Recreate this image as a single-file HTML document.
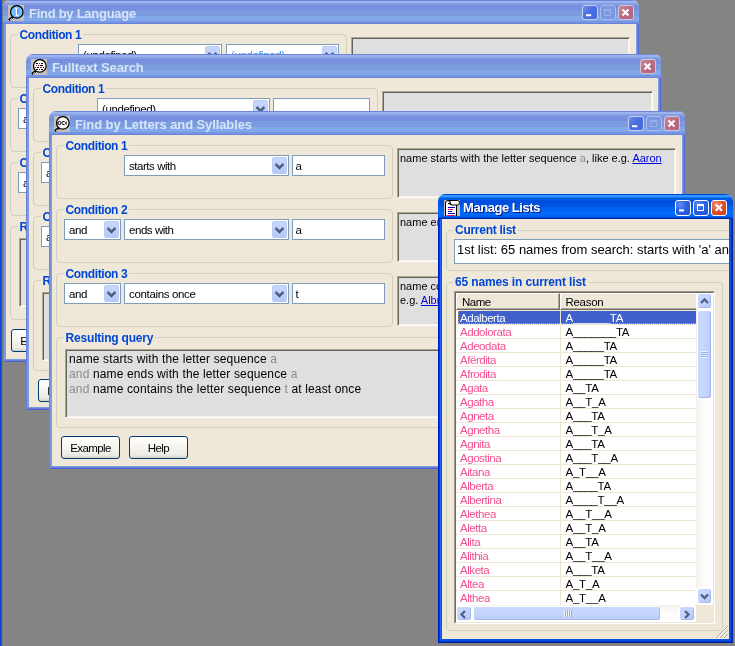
<!DOCTYPE html><html><head><meta charset="utf-8"><title>UI</title><style>
html,body{margin:0;padding:0}
body{width:735px;height:646px;overflow:hidden;background:#848484;position:relative;font-family:"Liberation Sans",sans-serif;font-size:11px;color:#000}
*{box-sizing:border-box}
.abs{position:absolute}
.edgeL{position:absolute;left:0;top:0;width:1px;height:646px;background:#0846e0;box-shadow:1px 0 0 #3a4e9a}
.edgeL2{position:absolute;left:2px;top:0;width:1px;height:646px;background:#7a7a78}
/* windows */
.win{position:absolute;will-change:transform;overflow:hidden;border-radius:7px 7px 0 0;background:#efe8d8}
.win .tb{position:absolute;left:0;top:0;right:0;height:24px}
.win.in .tb{background:linear-gradient(180deg,#6e84dc 1.04%,#6e84dc 3.12%,#9bb4ee 5.21%,#9bb4ee 11.46%,#849fe6 13.54%,#849fe6 19.79%,#7891de 21.88%,#7891de 40.62%,#7a9bde 42.71%,#7a9bde 65.62%,#82a9e8 67.71%,#82a9e8 73.96%,#82a8eb 76.04%,#82a8eb 86.46%,#7696e4 88.54%,#7696e4 94.79%,#6982da 96.88%,#6982da 98.96%)}
.win.in .fr{position:absolute;left:0;top:24px;right:0;bottom:0;box-shadow:inset 1px 0 0 #6c80d8,inset -1px 0 0 #5068cf,inset 0 -1px 0 #4561d2,inset 2px 0 0 #7b99e3,inset -2px 0 0 #6a85dc,inset 0 -2px 0 #6f7cd4,inset 3px 0 0 #7b99e3,inset -3px 0 0 #7d9ae3,inset 0 -3px 0 #7b99e3}
.win.ac .tb{height:25px;background:linear-gradient(180deg,#0046dc 1.00%,#0046dc 3.00%,#3296ff 5.00%,#3296ff 11.00%,#1478f5 13.00%,#1478f5 15.00%,#005fe1 17.00%,#005fe1 23.00%,#004ede 25.00%,#004ede 39.00%,#0054e4 41.00%,#0054e4 51.00%,#0062f0 53.00%,#0062f0 67.00%,#006afa 69.00%,#006afa 83.00%,#0062f0 85.00%,#0062f0 91.00%,#0046d7 93.00%,#0046d7 95.00%,#0028aa 97.00%,#0028aa 99.00%)}
.win.ac .fr{position:absolute;left:0;top:25px;right:0;bottom:0;box-shadow:inset 1px 0 0 #0019cf,inset -1px 0 0 #001ea0,inset 0 -1px 0 #001ea0,inset 2px 0 0 #0831d9,inset -2px 0 0 #0237cf,inset 0 -2px 0 #0237cf,inset 3px 0 0 #166aee,inset -3px 0 0 #0550e0,inset 0 -3px 0 #0550e0,inset 4px 0 0 #0855dd,inset -4px 0 0 #0855dd,inset 0 -4px 0 #0855dd}
.ttl{position:absolute;top:5.5px;font-weight:bold;font-size:13px;line-height:16px;white-space:pre}
.in .ttl{color:#d8e4f8}
.ac .ttl{top:6px;color:#fff;text-shadow:1px 1px 0 #0a1883}
.ico{position:absolute;width:16px;height:16px;background:#c0c0c0}
.cb{position:absolute;width:15.6px;height:15.6px;margin:-0.3px 0 0 -1px;border-radius:3px;border:1px solid #fff}
.in .cb{border-color:#c3d0f3}
.in .cb.min{background:linear-gradient(135deg,#6d8fe8 0%,#4a6fe0 45%,#4669dc 100%)}
.in .cb.max{background:#7b99e3;border-color:#a9bbec}
.in .cb.cls{background:linear-gradient(135deg,#c88a9c 0%,#b96a84 50%,#b06480 100%);border-color:#d7c3d8}
.ac .cb{width:16px;height:16px;margin:0}
.ac .cb.min,.ac .cb.max{background:radial-gradient(circle at 30% 25%,#5c8cf6 0%,#2d62e0 45%,#1f4fd0 100%)}
.ac .cb.cls{background:radial-gradient(circle at 30% 25%,#f0927a 0%,#e0532f 45%,#c63c14 100%)}
.cb svg{position:absolute;left:0;top:0}
/* controls */
.gb{position:absolute;border:1px solid #d0d0bf;border-radius:4px}
.gl{position:absolute;font-weight:bold;color:#0046d5;background:#efe8d8;padding:0 2px;line-height:13px;white-space:pre;font-size:12px}
.combo,.edit{position:absolute;height:21px;border:1px solid #7f9db9;background:#fff;line-height:19px;white-space:pre;overflow:hidden;font-size:11.5px}
.combo span,.edit span{position:absolute;left:4px;top:1px}
.edit span{left:2.6px}
.dd{position:absolute;right:1px;top:1px;width:15px;height:17px;border-radius:2px;background:linear-gradient(180deg,#c6d6fd 0%,#c1d2fb 50%,#b4c7f5 100%);border:1px solid #b9cbf6}
.dd svg{position:absolute;left:2px;top:4.5px}
.sunk{position:absolute;background:#dfdfdf;border:1px solid;border-color:#aaa799 #fff #fff #aaa799;box-shadow:inset 1px 1px 0 #66645a,inset -1px -1px 0 #f5f3ea;white-space:pre;overflow:hidden}
.sunk div{position:absolute;left:2px;white-space:pre;line-height:14px}
.btn{position:absolute;height:23px;border:1px solid #003c74;border-radius:3px;background:linear-gradient(180deg,#fff 0%,#f7f6f1 40%,#ecebe4 85%,#d6d0c5 100%);text-align:center;line-height:22px;white-space:pre;font-size:11.5px}
a{color:#0000e0;text-decoration:underline}
.g{color:#8c8c8c}

.lv{position:absolute;background:#fff;border:1px solid;border-color:#9a978a #fff #fff #9a978a;overflow:hidden}
.lvi{position:absolute;left:0;top:0;right:0;bottom:0;border:1px solid;border-color:#6e6b60 #efe8d8 #efe8d8 #6e6b60;overflow:hidden}
.hc{position:absolute;top:0;height:17px;background:#efe8d8;border:1px solid;border-color:#fff #716f64 #716f64 #fff;box-shadow:inset -1px -1px 0 #aca899;line-height:14px;font-size:11.5px;white-space:pre}
.hc span{position:absolute;top:1px}
.row{position:absolute;left:0;height:14px;width:240px;line-height:15px;white-space:pre;font-size:11.5px;border-top:1px solid #ede6d4}
.row .n{position:absolute;left:4px;top:0;color:#f4508f;letter-spacing:-0.45px}
.row .r{position:absolute;left:109.5px;top:0;color:#000;letter-spacing:-0.25px}
.selbg{position:absolute;left:2px;top:18px;width:260px;height:13px;background:#4060cc;border:1px dotted #e8a33c;border-top:none}
.row.sel .n,.row.sel .r{color:#fff}
.colsep{position:absolute;left:104px;top:17px;width:1px;height:296px;background:#ede6d4}
.sbv{position:absolute;background:linear-gradient(90deg,#f3f1ec 0%,#fdfdfb 50%,#fefefd 100%)}
.sbh{position:absolute;background:linear-gradient(180deg,#f3f1ec 0%,#fdfdfb 50%,#fefefd 100%)}
.sbb{position:absolute;width:17px;height:17px;border-radius:3px;border:1px solid #fff;background:linear-gradient(135deg,#cddafd 0%,#c3d3fc 50%,#b5c8f5 100%);box-shadow:inset -1px -1px 0 #a3b8ec,0 0 0 1px #fff}
.sbb svg{position:absolute}
.thumb{position:absolute;border-radius:3px;border:1px solid #fff;background:linear-gradient(90deg,#cbd9fd 0%,#c4d4fd 60%,#b8caf7 100%);box-shadow:inset -1px -1px 0 #a3b8ec}
.thumbh{position:absolute;border-radius:3px;border:1px solid #fff;background:linear-gradient(180deg,#cbd9fd 0%,#c4d4fd 60%,#b8caf7 100%);box-shadow:inset -1px -1px 0 #a3b8ec}
</style></head><body><div class="edgeL"></div><div class="edgeL2"></div><div class="win in" style="left:3px;top:0px;width:636px;height:362px"><div class="tb"></div><div class="gb" style="left:7px;top:34px;width:337px;height:54px"></div><div class="gl" style="left:14.6px;top:28.5px;letter-spacing:-0.39px">Condition 1</div><div class="combo" style="left:75px;top:44px;width:144px"><span style="color:#000;letter-spacing:-0.4px">(undefined)</span><div class="dd"><svg width="9" height="7" viewBox="0 0 9 7"><path d="M0.5 1 L4.5 5 L8.5 1" fill="none" stroke="#4d6185" stroke-width="2.5"/></svg></div></div><div class="combo" style="left:223px;top:44px;width:113px"><span style="color:#3c96f0;letter-spacing:-0.4px">(undefined)</span><div class="dd"><svg width="9" height="7" viewBox="0 0 9 7"><path d="M0.5 1 L4.5 5 L8.5 1" fill="none" stroke="#4d6185" stroke-width="2.5"/></svg></div></div><div class="sunk" style="left:348px;top:37px;width:279px;height:50px"></div><div class="gb" style="left:7px;top:98px;width:337px;height:54px"></div><div class="gl" style="left:14.6px;top:92.5px;letter-spacing:-0.39px">Condition 2</div><div class="combo" style="left:15px;top:108px;width:57px"><span style="color:#000;letter-spacing:-0.4px">and</span><div class="dd"><svg width="9" height="7" viewBox="0 0 9 7"><path d="M0.5 1 L4.5 5 L8.5 1" fill="none" stroke="#4d6185" stroke-width="2.5"/></svg></div></div><div class="gb" style="left:7px;top:162px;width:337px;height:54px"></div><div class="gl" style="left:14.6px;top:156.5px;letter-spacing:-0.39px">Condition 3</div><div class="combo" style="left:15px;top:172px;width:57px"><span style="color:#000;letter-spacing:-0.4px">and</span><div class="dd"><svg width="9" height="7" viewBox="0 0 9 7"><path d="M0.5 1 L4.5 5 L8.5 1" fill="none" stroke="#4d6185" stroke-width="2.5"/></svg></div></div><div class="gb" style="left:7px;top:226px;width:624px;height:94px"></div><div class="gl" style="left:14.6px;top:220.5px;letter-spacing:-0.2px">Resulting query</div><div class="sunk" style="left:16px;top:238px;width:611px;height:69px"></div><div class="btn" style="left:8px;top:329px;width:59px;letter-spacing:-0.6px">Example</div><div class="fr"></div><div class="ico" style="left:5px;top:5px;background:none"><svg width="16" height="16" viewBox="0 0 16 16"><rect width="16" height="16" fill="#c0c0c0"/><path d="M5.2 11.6 L0.9 15.1" stroke="#000" stroke-width="2.3"/><path d="M3.9 13.3 L2.1 14.8" stroke="#fff" stroke-width="0.9"/><circle cx="8.8" cy="6.9" r="6.3" fill="#70bcff" stroke="#000" stroke-width="1.25"/><path d="M9.6 4 V9.4" stroke="#2a8cff" stroke-width="1.2"/><path d="M7.3 3.4 L8.4 3.2 L8.5 10.2 L10.6 10.2" stroke="#fff" stroke-width="1.3" fill="none"/></svg></div><div class="ttl" style="left:26px;letter-spacing:-0.27px">Find by Language</div><div class="cb cls" style="left:616px;top:5px"><svg width="13" height="13" viewBox="0 0 13 13"><path d="M3.5 3.5 L9.5 9.5 M9.5 3.5 L3.5 9.5" stroke="#fff" stroke-width="2" fill="none"/></svg></div><div class="cb max" style="left:598px;top:5px"><svg width="13" height="13" viewBox="0 0 13 13"><rect x="3.5" y="3.5" width="6" height="6" fill="none" stroke="#98afea" stroke-width="1"/><rect x="3" y="3" width="7" height="2" fill="#98afea"/></svg></div><div class="cb min" style="left:580px;top:5px"><svg width="13" height="13" viewBox="0 0 13 13"><rect x="3" y="8.2" width="5.2" height="2" fill="#fff"/></svg></div></div><div class="win in" style="left:26px;top:54px;width:635px;height:356px"><div class="tb"></div><div class="gb" style="left:7px;top:34px;width:345px;height:54px"></div><div class="gl" style="left:14.6px;top:28.5px;letter-spacing:-0.39px">Condition 1</div><div class="combo" style="left:71px;top:44px;width:173px"><span style="color:#000;letter-spacing:-0.4px">(undefined)</span><div class="dd"><svg width="9" height="7" viewBox="0 0 9 7"><path d="M0.5 1 L4.5 5 L8.5 1" fill="none" stroke="#4d6185" stroke-width="2.5"/></svg></div></div><div class="edit" style="left:247px;top:44px;width:97px"><span style="letter-spacing:0px"></span></div><div class="sunk" style="left:356px;top:37px;width:271px;height:50px"></div><div class="gb" style="left:7px;top:98px;width:345px;height:54px"></div><div class="gl" style="left:14.6px;top:92.5px;letter-spacing:-0.39px">Condition 2</div><div class="combo" style="left:15px;top:108px;width:57px"><span style="color:#000;letter-spacing:-0.4px">and</span><div class="dd"><svg width="9" height="7" viewBox="0 0 9 7"><path d="M0.5 1 L4.5 5 L8.5 1" fill="none" stroke="#4d6185" stroke-width="2.5"/></svg></div></div><div class="gb" style="left:7px;top:162px;width:345px;height:54px"></div><div class="gl" style="left:14.6px;top:156.5px;letter-spacing:-0.39px">Condition 3</div><div class="combo" style="left:15px;top:172px;width:57px"><span style="color:#000;letter-spacing:-0.4px">and</span><div class="dd"><svg width="9" height="7" viewBox="0 0 9 7"><path d="M0.5 1 L4.5 5 L8.5 1" fill="none" stroke="#4d6185" stroke-width="2.5"/></svg></div></div><div class="gb" style="left:7px;top:226px;width:624px;height:91px"></div><div class="gl" style="left:14.6px;top:220.5px;letter-spacing:-0.2px">Resulting query</div><div class="sunk" style="left:16px;top:238px;width:611px;height:69px"></div><div class="btn" style="left:12px;top:325px;width:59px;letter-spacing:-0.6px">Example</div><div class="fr"></div><div class="ico" style="left:5px;top:5px;background:none"><svg width="16" height="16" viewBox="0 0 16 16"><rect width="16" height="16" fill="#c0c0c0"/><path d="M5.2 11.6 L0.9 15.1" stroke="#000" stroke-width="2.3"/><path d="M3.9 13.3 L2.1 14.8" stroke="#fff" stroke-width="0.9"/><circle cx="8.8" cy="6.9" r="6.3" fill="#fff" stroke="#000" stroke-width="1.25"/><rect x="5" y="4" width="2" height="1" fill="#000" shape-rendering="crispEdges"/><rect x="8" y="4" width="1" height="1" fill="#f00" shape-rendering="crispEdges"/><rect x="10" y="4" width="2" height="1" fill="#000" shape-rendering="crispEdges"/><rect x="5" y="6" width="1" height="1" fill="#f00" shape-rendering="crispEdges"/><rect x="7" y="6" width="1" height="1" fill="#000" shape-rendering="crispEdges"/><rect x="9" y="6" width="3" height="1" fill="#000" shape-rendering="crispEdges"/><rect x="4" y="8" width="1" height="1" fill="#f00" shape-rendering="crispEdges"/><rect x="6" y="8" width="2" height="1" fill="#000" shape-rendering="crispEdges"/><rect x="9" y="8" width="2" height="1" fill="#f00" shape-rendering="crispEdges"/><rect x="12" y="8" width="1" height="1" fill="#000" shape-rendering="crispEdges"/><rect x="5" y="10" width="2" height="1" fill="#000" shape-rendering="crispEdges"/><rect x="8" y="10" width="1" height="1" fill="#000" shape-rendering="crispEdges"/><rect x="10" y="10" width="2" height="1" fill="#000" shape-rendering="crispEdges"/></svg></div><div class="ttl" style="left:26px;letter-spacing:-0.1px">Fulltext Search</div><div class="cb cls" style="left:615px;top:5px"><svg width="13" height="13" viewBox="0 0 13 13"><path d="M3.5 3.5 L9.5 9.5 M9.5 3.5 L3.5 9.5" stroke="#fff" stroke-width="2" fill="none"/></svg></div></div><div class="win in" style="left:49px;top:111px;width:636px;height:358px"><div class="tb"></div><div class="gb" style="left:7px;top:34px;width:337px;height:54px"></div><div class="gl" style="left:14.6px;top:28.5px;letter-spacing:-0.39px">Condition 1</div><div class="combo" style="left:75px;top:44px;width:165px"><span style="color:#000;letter-spacing:-0.45px">starts with</span><div class="dd"><svg width="9" height="7" viewBox="0 0 9 7"><path d="M0.5 1 L4.5 5 L8.5 1" fill="none" stroke="#4d6185" stroke-width="2.5"/></svg></div></div><div class="edit" style="left:243px;top:44px;width:93px"><span style="letter-spacing:0px">a</span></div><div class="sunk" style="left:348px;top:37px;width:279px;height:50px"><div style="top:2px">name starts with the letter sequence <span class="g">a</span>, like e.g. <a>Aaron</a><span style="color:#c4c4c4">.</span></div></div><div class="gb" style="left:7px;top:98px;width:337px;height:54px"></div><div class="gl" style="left:14.6px;top:92.5px;letter-spacing:-0.39px">Condition 2</div><div class="combo" style="left:15px;top:108px;width:57px"><span style="color:#000;letter-spacing:-0.4px">and</span><div class="dd"><svg width="9" height="7" viewBox="0 0 9 7"><path d="M0.5 1 L4.5 5 L8.5 1" fill="none" stroke="#4d6185" stroke-width="2.5"/></svg></div></div><div class="combo" style="left:75px;top:108px;width:165px"><span style="color:#000;letter-spacing:-0.45px">ends with</span><div class="dd"><svg width="9" height="7" viewBox="0 0 9 7"><path d="M0.5 1 L4.5 5 L8.5 1" fill="none" stroke="#4d6185" stroke-width="2.5"/></svg></div></div><div class="edit" style="left:243px;top:108px;width:93px"><span style="letter-spacing:0px">a</span></div><div class="sunk" style="left:348px;top:101px;width:279px;height:50px"><div style="top:2px">name ends with the letter sequence <span class="g">a</span></div></div><div class="gb" style="left:7px;top:162px;width:337px;height:54px"></div><div class="gl" style="left:14.6px;top:156.5px;letter-spacing:-0.39px">Condition 3</div><div class="combo" style="left:15px;top:172px;width:57px"><span style="color:#000;letter-spacing:-0.4px">and</span><div class="dd"><svg width="9" height="7" viewBox="0 0 9 7"><path d="M0.5 1 L4.5 5 L8.5 1" fill="none" stroke="#4d6185" stroke-width="2.5"/></svg></div></div><div class="combo" style="left:75px;top:172px;width:165px"><span style="color:#000;letter-spacing:-0.34px">contains once</span><div class="dd"><svg width="9" height="7" viewBox="0 0 9 7"><path d="M0.5 1 L4.5 5 L8.5 1" fill="none" stroke="#4d6185" stroke-width="2.5"/></svg></div></div><div class="edit" style="left:243px;top:172px;width:93px"><span style="letter-spacing:0px">t</span></div><div class="sunk" style="left:348px;top:165px;width:279px;height:50px"><div style="top:2px">name contains the letter sequence <span class="g">t</span> at least once, like<br>e.g. <a>Albrecht</a></div></div><div class="gb" style="left:7px;top:226px;width:624px;height:91px"></div><div class="gl" style="left:14.6px;top:220.5px;letter-spacing:-0.2px">Resulting query</div><div class="sunk" style="left:16px;top:238px;width:611px;height:69px"><div style="top:2px;left:3px;font-size:12px;line-height:15px;letter-spacing:0.14px">name starts with the letter sequence <span class="g">a</span><br><span class="g">and</span> name ends with the letter sequence <span class="g">a</span><br><span class="g">and</span> name contains the letter sequence <span class="g">t</span> at least once</div></div><div class="btn" style="left:12px;top:325px;width:59px;letter-spacing:-0.6px">Example</div><div class="btn" style="left:80px;top:325px;width:59px;letter-spacing:-0.6px">Help</div><div class="fr"></div><div class="ico" style="left:5px;top:5px;background:none"><svg width="16" height="16" viewBox="0 0 16 16"><rect width="16" height="16" fill="#c0c0c0"/><path d="M5.2 11.6 L0.9 15.1" stroke="#000" stroke-width="2.3"/><path d="M3.9 13.3 L2.1 14.8" stroke="#fff" stroke-width="0.9"/><circle cx="8.8" cy="6.9" r="6.3" fill="#fff" stroke="#000" stroke-width="1.25"/><rect x="3.2" y="6.3" width="1" height="1.4" fill="#000"/><rect x="4.2" y="5.4" width="2.6" height="3.2" rx="1" fill="none" stroke="#000" stroke-width="1"/><path d="M10.6 5.5 H9 Q8.2 5.5 8.2 6.4 V7.6 Q8.2 8.5 9 8.5 H10.6" fill="none" stroke="#000" stroke-width="1"/><path d="M12.6 5 V9 L10.9 7 Z" fill="#000"/></svg></div><div class="ttl" style="left:26px;letter-spacing:-0.1px">Find by Letters and Syllables</div><div class="cb cls" style="left:616px;top:5px"><svg width="13" height="13" viewBox="0 0 13 13"><path d="M3.5 3.5 L9.5 9.5 M9.5 3.5 L3.5 9.5" stroke="#fff" stroke-width="2" fill="none"/></svg></div><div class="cb max" style="left:598px;top:5px"><svg width="13" height="13" viewBox="0 0 13 13"><rect x="3.5" y="3.5" width="6" height="6" fill="none" stroke="#98afea" stroke-width="1"/><rect x="3" y="3" width="7" height="2" fill="#98afea"/></svg></div><div class="cb min" style="left:580px;top:5px"><svg width="13" height="13" viewBox="0 0 13 13"><rect x="3" y="8.2" width="5.2" height="2" fill="#fff"/></svg></div></div><div class="win ac" style="left:438px;top:194px;width:295px;height:449px"><div class="tb"></div><div class="gb" style="left:8px;top:36px;width:290px;height:41px"></div><div class="gl" style="left:15px;top:29.8px;letter-spacing:-0.27px">Current list</div><div class="edit" style="left:16px;top:45px;width:290px;height:25px;line-height:21px;font-size:13px"><span style="left:2px;top:-1px;letter-spacing:-0.02px">1st list: 65 names from search: starts with 'a' and ends with 'a'</span></div><div class="gb" style="left:8px;top:88px;width:277px;height:349px"></div><div class="gl" style="left:15px;top:81.8px;letter-spacing:-0.13px">65 names in current list</div><div class="lv" style="left:16px;top:97px;width:261px;height:333px"><div class="lvi"><div class="hc" style="left:0;width:104px"><span style="left:5px;letter-spacing:-0.5px">Name</span></div><div class="hc" style="left:104px;width:160px"><span style="left:4.5px;letter-spacing:-0.3px">Reason</span></div><div class="selbg"></div><div class="row sel" style="top:17px"><span class="n">Adalberta</span><span class="r">A______TA</span></div><div class="row" style="top:31px"><span class="n">Addolorata</span><span class="r">A_______TA</span></div><div class="row" style="top:45px"><span class="n">Adeodata</span><span class="r">A_____TA</span></div><div class="row" style="top:59px"><span class="n">Afërdita</span><span class="r">A_____TA</span></div><div class="row" style="top:73px"><span class="n">Afrodita</span><span class="r">A_____TA</span></div><div class="row" style="top:87px"><span class="n">Agata</span><span class="r">A__TA</span></div><div class="row" style="top:101px"><span class="n">Agatha</span><span class="r">A__T_A</span></div><div class="row" style="top:115px"><span class="n">Agneta</span><span class="r">A___TA</span></div><div class="row" style="top:129px"><span class="n">Agnetha</span><span class="r">A___T_A</span></div><div class="row" style="top:143px"><span class="n">Agnita</span><span class="r">A___TA</span></div><div class="row" style="top:157px"><span class="n">Agostina</span><span class="r">A___T__A</span></div><div class="row" style="top:171px"><span class="n">Aitana</span><span class="r">A_T__A</span></div><div class="row" style="top:185px"><span class="n">Alberta</span><span class="r">A____TA</span></div><div class="row" style="top:199px"><span class="n">Albertina</span><span class="r">A____T__A</span></div><div class="row" style="top:213px"><span class="n">Alethea</span><span class="r">A__T__A</span></div><div class="row" style="top:227px"><span class="n">Aletta</span><span class="r">A__T_A</span></div><div class="row" style="top:241px"><span class="n">Alita</span><span class="r">A__TA</span></div><div class="row" style="top:255px"><span class="n">Alithia</span><span class="r">A__T__A</span></div><div class="row" style="top:269px"><span class="n">Alketa</span><span class="r">A___TA</span></div><div class="row" style="top:283px"><span class="n">Altea</span><span class="r">A_T_A</span></div><div class="row" style="top:297px"><span class="n">Althea</span><span class="r">A_T__A</span></div><div class="colsep"></div><div class="sbv" style="left:240px;top:0;width:17px;height:312px"></div><div class="sbb" style="left:241px;top:0;width:15px;height:16px"><svg width="9" height="9" viewBox="0 0 9 9" style="left:2px;top:2.5px"><path d="M1 6 L4.5 2.5 L8 6" fill="none" stroke="#4d6185" stroke-width="2.3"/></svg></div><div class="thumb" style="left:241px;top:17px;width:15px;height:89px"><div class="abs" style="left:3px;top:40px;width:7px;height:7px;background:repeating-linear-gradient(180deg,#eef4fe 0,#eef4fe 1px,#8cb0f8 1px,#8cb0f8 2px)"></div></div><div class="sbb" style="left:241px;top:295px;width:15px;height:16px"><svg width="9" height="9" viewBox="0 0 9 9" style="left:2px;top:2.5px"><path d="M1 2.5 L4.5 6 L8 2.5" fill="none" stroke="#4d6185" stroke-width="2.3"/></svg></div><div class="sbh" style="left:0;top:312px;width:240px;height:17px"></div><div class="sbb" style="left:0;top:313px;width:16px;height:15px"><svg width="9" height="9" viewBox="0 0 9 9" style="left:2px;top:2.5px"><path d="M6 1 L2.5 4.5 L6 8" fill="none" stroke="#4d6185" stroke-width="2.3"/></svg></div><div class="thumbh" style="left:17px;top:313px;width:188px;height:15px"><div class="abs" style="left:90px;top:3px;width:8px;height:7px;background:repeating-linear-gradient(90deg,#eef4fe 0,#eef4fe 1px,#8cb0f8 1px,#8cb0f8 2px)"></div></div><div class="sbb" style="left:223px;top:313px;width:16px;height:15px"><svg width="9" height="9" viewBox="0 0 9 9" style="left:2px;top:2.5px"><path d="M3 1 L6.5 4.5 L3 8" fill="none" stroke="#4d6185" stroke-width="2.3"/></svg></div><div class="abs" style="left:240px;top:312px;width:17px;height:17px;background:#efe8d8"></div></div></div><svg class="abs" style="left:277px;top:431px" width="14" height="14" viewBox="0 0 14 14"><g stroke-width="1"><path d="M13 1 L1 13 M13 5 L5 13 M13 9 L9 13" stroke="#a9a594"/><path d="M13 2 L2 13 M13 6 L6 13 M13 10 L10 13" stroke="#fff"/></g></svg><div class="fr"></div><div class="ico" style="left:6px;top:6px;background:none"><svg width="16" height="16" viewBox="0 0 16 16"><rect width="16" height="16" fill="#c0c0c0"/><path d="M1.5 16 V3 Q1.5 0.5 4 0.5 H13.5 Q15.5 0.5 15.5 2.75 Q15.5 5 13.5 5 H12.5 V16 Z" fill="#fff" stroke="#000" stroke-width="1"/><path d="M4 0.5 Q6.4 0.8 6.2 3 Q5.6 4.3 4.3 3.2 M6.2 3 Q6.4 5 8 5 H13" fill="none" stroke="#000" stroke-width="1.2"/><rect x="4" y="7" width="7" height="1" fill="#0000c8"/><rect x="4" y="9" width="5" height="1" fill="#ff0064"/><rect x="4" y="11" width="4" height="1" fill="#0000c8"/><rect x="4" y="13" width="7" height="1" fill="#0000c8"/><rect x="4" y="15" width="6" height="1" fill="#ff0064"/></svg></div><div class="ttl" style="left:25px;letter-spacing:-0.45px">Manage Lists</div><div class="cb cls" style="left:273px;top:6px"><svg width="14" height="14" viewBox="0 0 14 14"><path d="M3.7 3.5 L9.9 9.7 M9.9 3.5 L3.7 9.7" stroke="#fff" stroke-width="2.1" fill="none"/></svg></div><div class="cb max" style="left:255px;top:6px"><svg width="14" height="14" viewBox="0 0 14 14"><rect x="3.5" y="3.5" width="6" height="6" fill="none" stroke="#fff" stroke-width="1"/><rect x="3" y="3" width="7" height="2" fill="#fff"/></svg></div><div class="cb min" style="left:237px;top:6px"><svg width="14" height="14" viewBox="0 0 14 14"><rect x="3" y="8.4" width="5" height="2" fill="#fff"/></svg></div></div></body></html>
